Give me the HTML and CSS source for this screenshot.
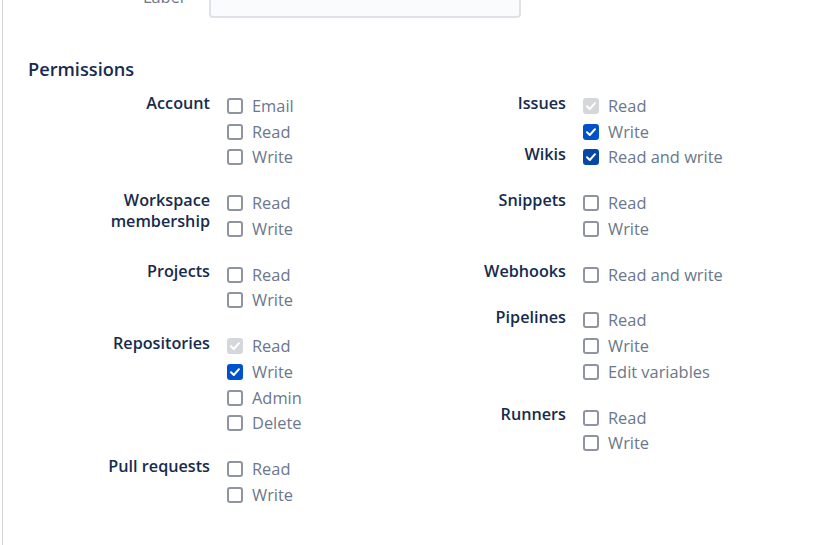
FILE: index.html
```html
<!DOCTYPE html>
<html>
<head>
<meta charset="utf-8">
<link rel="stylesheet" href="styles.css">
</head>
<body>
<div class="page">
  <div class="field-row">
    <div class="field-label">Label</div>
    <div class="field-input"></div>
  </div>
  <h2 class="section-title">Permissions</h2>
  <div class="perm-grid">
    <div class="perm-col">
      <div class="perm-group">
        <div class="perm-name">Account</div>
        <div class="perm-options">
          <div class="opt"><span class="box"></span><span class="opt-text">Email</span></div>
          <div class="opt"><span class="box"></span><span class="opt-text">Read</span></div>
          <div class="opt"><span class="box"></span><span class="opt-text">Write</span></div>
        </div>
      </div>
      <div class="perm-group">
        <div class="perm-name">Workspace<br>membership</div>
        <div class="perm-options">
          <div class="opt"><span class="box"></span><span class="opt-text">Read</span></div>
          <div class="opt"><span class="box"></span><span class="opt-text">Write</span></div>
        </div>
      </div>
      <div class="perm-group">
        <div class="perm-name">Projects</div>
        <div class="perm-options">
          <div class="opt"><span class="box"></span><span class="opt-text">Read</span></div>
          <div class="opt"><span class="box"></span><span class="opt-text">Write</span></div>
        </div>
      </div>
      <div class="perm-group">
        <div class="perm-name">Repositories</div>
        <div class="perm-options">
          <div class="opt"><span class="box box-disabled"><svg viewBox="0 0 16 16" class="check"><polyline points="4,8.3 6.8,11 12,5.2"/></svg></span><span class="opt-text">Read</span></div>
          <div class="opt"><span class="box box-checked"><svg viewBox="0 0 16 16" class="check"><polyline points="4,8.3 6.8,11 12,5.2"/></svg></span><span class="opt-text">Write</span></div>
          <div class="opt"><span class="box"></span><span class="opt-text">Admin</span></div>
          <div class="opt"><span class="box"></span><span class="opt-text">Delete</span></div>
        </div>
      </div>
      <div class="perm-group">
        <div class="perm-name">Pull requests</div>
        <div class="perm-options">
          <div class="opt"><span class="box"></span><span class="opt-text">Read</span></div>
          <div class="opt"><span class="box"></span><span class="opt-text">Write</span></div>
        </div>
      </div>
    </div>
    <div class="perm-col">
      <div class="perm-group perm-group-tight">
        <div class="perm-name">Issues</div>
        <div class="perm-options">
          <div class="opt"><span class="box box-disabled"><svg viewBox="0 0 16 16" class="check"><polyline points="4,8.3 6.8,11 12,5.2"/></svg></span><span class="opt-text">Read</span></div>
          <div class="opt"><span class="box box-checked"><svg viewBox="0 0 16 16" class="check"><polyline points="4,8.3 6.8,11 12,5.2"/></svg></span><span class="opt-text">Write</span></div>
        </div>
      </div>
      <div class="perm-group">
        <div class="perm-name">Wikis</div>
        <div class="perm-options">
          <div class="opt"><span class="box box-checked box-dark"><svg viewBox="0 0 16 16" class="check"><polyline points="4,8.3 6.8,11 12,5.2"/></svg></span><span class="opt-text">Read and write</span></div>
        </div>
      </div>
      <div class="perm-group">
        <div class="perm-name">Snippets</div>
        <div class="perm-options">
          <div class="opt"><span class="box"></span><span class="opt-text">Read</span></div>
          <div class="opt"><span class="box"></span><span class="opt-text">Write</span></div>
        </div>
      </div>
      <div class="perm-group">
        <div class="perm-name">Webhooks</div>
        <div class="perm-options">
          <div class="opt"><span class="box"></span><span class="opt-text">Read and write</span></div>
        </div>
      </div>
      <div class="perm-group">
        <div class="perm-name">Pipelines</div>
        <div class="perm-options">
          <div class="opt"><span class="box"></span><span class="opt-text">Read</span></div>
          <div class="opt"><span class="box"></span><span class="opt-text">Write</span></div>
          <div class="opt"><span class="box"></span><span class="opt-text">Edit variables</span></div>
        </div>
      </div>
      <div class="perm-group">
        <div class="perm-name">Runners</div>
        <div class="perm-options">
          <div class="opt"><span class="box"></span><span class="opt-text">Read</span></div>
          <div class="opt"><span class="box"></span><span class="opt-text">Write</span></div>
        </div>
      </div>
    </div>
  </div>
</div>
</body>
</html>
```
FILE: styles.css
```css
html, body {
  margin: 0;
  padding: 0;
  background: #ffffff;
  height: 100%;
  overflow: hidden;
}
body {
  font-family: "Open Sans", "Noto Sans", sans-serif;
  padding-left: 2px;
}
.page {
  border-left: 1px solid #d4d4d4;
  height: calc(100vh + 22px);
  padding-left: 25px;
  box-sizing: border-box;
}
.field-row {
  display: flex;
  align-items: flex-start;
  margin-top: -22px;
  gap: 25px;
}
.field-label {
  width: 156px;
  text-align: right;
  font-size: 16.4px;
  line-height: 22px;
  padding-top: 8px;
  color: #6b778c;
}
.field-input {
  width: 312px;
  height: 40px;
  border: 2px solid #dfe1e6;
  border-radius: 4px;
  background: #fafbfc;
  box-sizing: border-box;
}
.section-title {
  margin: 38px 0 0 0;
  font-size: 18.2px;
  line-height: 26px;
  font-weight: 600;
  color: #172b4d;
}
.perm-grid {
  display: grid;
  grid-template-columns: 356px 1fr;
  margin-top: 11px;
}
.perm-col {
  display: flex;
  flex-direction: column;
}
.perm-group {
  display: grid;
  grid-template-columns: 182px 1fr;
  column-gap: 17px;
  margin-bottom: 20px;
}
.perm-group-tight {
  margin-bottom: 0;
}
.perm-name {
  text-align: right;
  font-size: 16.2px;
  font-weight: 600;
  line-height: 21px;
  color: #172b4d;
  margin-top: -0.5px;
}
.perm-options {
  display: flex;
  flex-direction: column;
}
.opt {
  display: flex;
  align-items: center;
  height: 25.75px;
  gap: 9px;
}
.box {
  width: 16px;
  height: 16px;
  box-sizing: border-box;
  border: 2px solid #8f93a2;
  border-radius: 3px;
  background: #ffffff;
  display: flex;
  align-items: center;
  justify-content: center;
  flex: none;
}
.box-checked {
  border-color: #0052cc;
  background: #0052cc;
}
.box-dark {
  border-color: #0747a6;
  background: #0747a6;
}
.box-disabled {
  border-color: #d5d7dc;
  background: #d5d7dc;
}
.check {
  width: 16px;
  height: 16px;
  fill: none;
  stroke: #ffffff;
  stroke-width: 2;
  stroke-linecap: round;
  stroke-linejoin: round;
  flex: none;
}
.opt-text {
  font-size: 16.4px;
  color: #6b778c;
  line-height: 20px;
}
```
